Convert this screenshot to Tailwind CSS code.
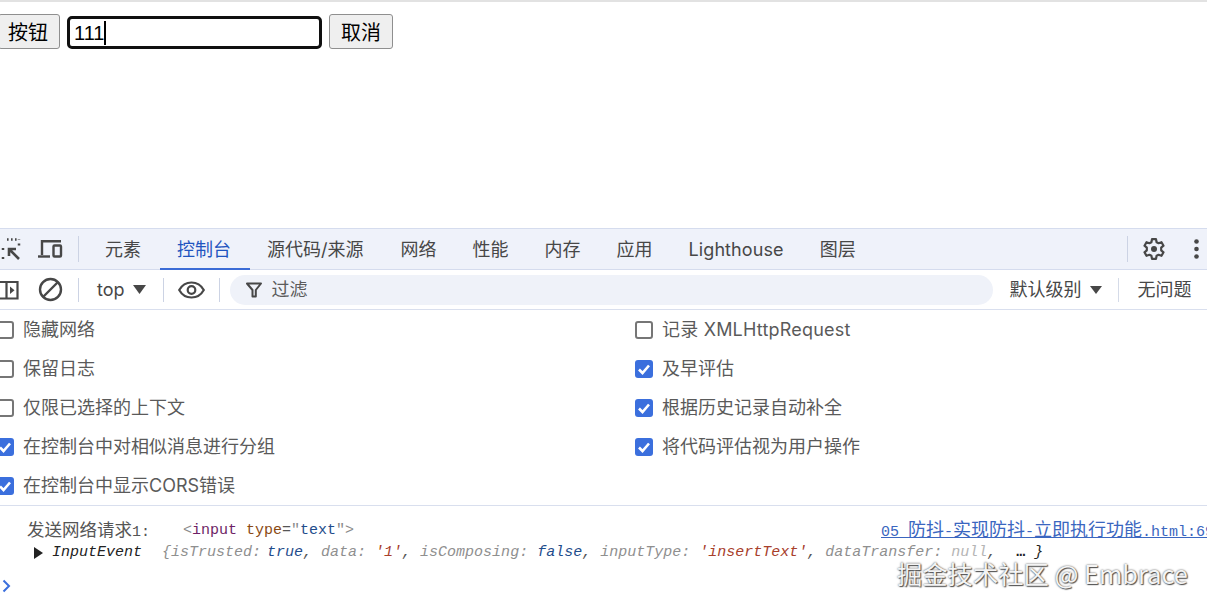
<!DOCTYPE html>
<html lang="zh-CN">
<head>
<meta charset="utf-8">
<script src="https://cdn.jsdelivr.net/npm/@tailwindcss/browser@4"></script>
</head>
<body class="bg-white">
<div class="relative w-[1207px] h-[606px] overflow-hidden flex flex-col font-['Inter','Noto_Sans_CJK_SC',sans-serif] text-[#474747]">
  <!-- page -->
  <div class="h-[228px] shrink-0 border-t-2 border-[#e2e2e2] flex items-start gap-[7px] pt-3 -ml-[2px] text-[20px] text-black font-['Liberation_Sans','Noto_Sans_CJK_SC',sans-serif]">
    <button class="w-[62px] h-[35px] rounded-[3px] border border-[#8f8f8f] bg-[#efefef] text-center leading-none pt-[3px] pr-[2px]">按钮</button>
    <div class="w-[255px] h-[33px] mt-[2px] rounded-[5px] border-[3px] border-[#101010] bg-white flex items-center pl-[4px] text-[20px]"><span>111</span><span class="w-[2px] h-[24px] bg-black"></span></div>
    <button class="w-[64px] h-[35px] rounded-[3px] border border-[#8f8f8f] bg-[#efefef] text-center leading-none pt-[3px]">取消</button>
  </div>

  <!-- tab bar -->
  <div class="h-[42px] shrink-0 bg-[#eff2fa] border-y border-[#d5dcee] flex items-center text-[18px] relative">
    <div class="w-[78px] flex items-center shrink-0">
      <svg class="ml-[1px]" width="20" height="22" viewBox="0 0 20 22" fill="none" stroke="#474747"><path d="M6 1.500h1.600M10 1.500h1.600M14 1.500h1.600M18 1.500v.5" stroke-width="2.500"/><path d="M18 5.500v2M2 10v2M2 19v2" stroke-width="2.500"/><path d="M18 21 8.500 11.500M8 18v-7h7" stroke-width="2.600"/></svg>
      <svg class="ml-[17px]" width="25" height="20" viewBox="0 0 25 20" fill="none" stroke="#474747" stroke-width="2.400"><path d="M4 16V2.200h19"/><path d="M0 17.500h12"/><rect x="15.500" y="6.500" width="7.500" height="11" rx="1"/></svg>
    </div>
    <div class="w-[1px] h-[26px] bg-[#ccd3e4]"></div>
    <div class="flex items-center h-full ml-[8px]">
      <span class="px-[18px]">元素</span>
      <span class="relative px-[18px] text-[#1f55c0] h-full flex items-center">控制台<span class="absolute left-[1px] -right-[1px] -bottom-[1px] h-[2px] bg-[#3b6cd6]"></span></span>
      <span class="pl-[18px] pr-[19px]">源代码/来源</span>
      <span class="px-[18px]">网络</span>
      <span class="px-[18px]">性能</span>
      <span class="px-[18px]">内存</span>
      <span class="px-[18px]">应用</span>
      <span class="px-[18px] tracking-[0.1px]">Lighthouse</span>
      <span class="px-[18px]">图层</span>
    </div>
    <div class="ml-auto flex items-center">
      <div class="w-[1px] h-[26px] bg-[#ccd3e4]"></div>
      <svg class="ml-[14px]" width="24" height="24" viewBox="0 0 24 24" fill="none" stroke="#474747" stroke-width="2.200"><path stroke-linejoin="round" d="M10 2.200h4l.6 3 2 1 2.900-1 2 3.500-2.300 2v2.600l2.300 2-2 3.500-2.900-1-2 1-.6 3h-4l-.6-3-2-1-2.900 1-2-3.500 2.300-2v-2.600l-2.300-2 2-3.500 2.900 1 2-1z"/><circle cx="12" cy="12" r="3" fill="#474747" stroke="none"/></svg>
      <svg class="ml-[28px] mr-[8px]" width="5" height="20" viewBox="0 0 5 20" fill="#474747"><circle cx="2.500" cy="2.500" r="2.300"/><circle cx="2.500" cy="10" r="2.300"/><circle cx="2.500" cy="17.500" r="2.300"/></svg>
    </div>
  </div>

  <!-- filter toolbar -->
  <div class="h-[40px] border-b border-[#d9dfee] flex items-center text-[18px] shrink-0">
    <div class="w-[78px] flex items-center shrink-0">
      <svg width="19" height="20" viewBox="0 0 19 20" fill="none" stroke="#474747" stroke-width="2.200"><path d="M0 2h17.500v16.500H0M6.500 2v16.500"/><path d="M10 6.500 14.500 10.200 10 14z" fill="#474747" stroke="none"/></svg>
      <svg class="ml-[19px]" width="25" height="25" viewBox="0 0 25 25" fill="none" stroke="#474747" stroke-width="2.400"><circle cx="12.500" cy="12.500" r="10.500"/><path d="M5 20 20 5"/></svg>
    </div>
    <div class="w-[1px] h-[24px] bg-[#ccd3e4]"></div>
    <span class="ml-[18px]">top</span>
    <svg class="ml-[8px]" width="13" height="9" viewBox="0 0 13 9" fill="#474747"><path d="M0 0h13L6.500 9z"/></svg>
    <div class="w-[1px] h-[24px] bg-[#ccd3e4] ml-[17px]"></div>
    <svg class="ml-[14px]" width="27" height="18" viewBox="0 0 27 18" fill="none" stroke="#474747" stroke-width="2.200"><path d="M1.200 9C4 4 8 1.500 13.500 1.500S23 4 25.800 9C23 14 19 16.500 13.500 16.500S4 14 1.200 9z"/><circle cx="13.500" cy="9" r="3.800"/></svg>
    <div class="w-[1px] h-[24px] bg-[#ccd3e4] ml-[14px]"></div>
    <div class="ml-[10px] w-[763px] h-[30px] rounded-full bg-[#eff2f9] flex items-center pl-[16px]">
      <svg width="16" height="16" viewBox="0 0 16 16" fill="none" stroke="#474747" stroke-width="2"><path d="M1 1.500h14L9.800 8v6.500H6.500V8z" stroke-linejoin="round"/></svg>
      <span class="ml-[10px] text-[#5b5b5b]">过滤</span>
    </div>
    <span class="ml-[17px]">默认级别</span>
    <svg class="ml-[8px]" width="12" height="8" viewBox="0 0 12 8" fill="#474747"><path d="M0 0h12L6 8z"/></svg>
    <div class="w-[1px] h-[24px] bg-[#d5dbe8] ml-[16px]"></div>
    <span class="ml-[19px]">无问题</span>
  </div>

  <!-- settings -->
  <div class="h-[196px] shrink-0 border-b border-[#d9dfee] grid grid-cols-[639px_1fr] -ml-[4px] text-[18px] text-[#5a5a5a]">
    <div class="flex flex-col">
      <label class="h-[39px] flex items-center gap-[9px]"><span class="w-[18px] h-[18px] rounded-[3px] border-2 border-[#767676] bg-white"></span>隐藏网络</label>
      <label class="h-[39px] flex items-center gap-[9px]"><span class="w-[18px] h-[18px] rounded-[3px] border-2 border-[#767676] bg-white"></span>保留日志</label>
      <label class="h-[39px] flex items-center gap-[9px]"><span class="w-[18px] h-[18px] rounded-[3px] border-2 border-[#767676] bg-white"></span>仅限已选择的上下文</label>
      <label class="h-[39px] flex items-center gap-[9px]"><span class="w-[18px] h-[18px] rounded-[3px] bg-[#3b6fdd] flex items-center justify-center"><svg width="14" height="14" viewBox="0 0 14 14" fill="none" stroke="#fff" stroke-width="2.600"><path d="M2 7.500 5.500 11 12 3.500"/></svg></span>在控制台中对相似消息进行分组</label>
      <label class="h-[39px] flex items-center gap-[9px]"><span class="w-[18px] h-[18px] rounded-[3px] bg-[#3b6fdd] flex items-center justify-center"><svg width="14" height="14" viewBox="0 0 14 14" fill="none" stroke="#fff" stroke-width="2.600"><path d="M2 7.500 5.500 11 12 3.500"/></svg></span>在控制台中显示CORS错误</label>
    </div>
    <div class="flex flex-col">
      <label class="h-[39px] flex items-center gap-[9px]"><span class="w-[18px] h-[18px] rounded-[3px] border-2 border-[#767676] bg-white"></span><span class="tracking-[0.2px]">记录 XMLHttpRequest</span></label>
      <label class="h-[39px] flex items-center gap-[9px]"><span class="w-[18px] h-[18px] rounded-[3px] bg-[#3b6fdd] flex items-center justify-center"><svg width="14" height="14" viewBox="0 0 14 14" fill="none" stroke="#fff" stroke-width="2.600"><path d="M2 7.500 5.500 11 12 3.500"/></svg></span>及早评估</label>
      <label class="h-[39px] flex items-center gap-[9px]"><span class="w-[18px] h-[18px] rounded-[3px] bg-[#3b6fdd] flex items-center justify-center"><svg width="14" height="14" viewBox="0 0 14 14" fill="none" stroke="#fff" stroke-width="2.600"><path d="M2 7.500 5.500 11 12 3.500"/></svg></span>根据历史记录自动补全</label>
      <label class="h-[39px] flex items-center gap-[9px]"><span class="w-[18px] h-[18px] rounded-[3px] bg-[#3b6fdd] flex items-center justify-center"><svg width="14" height="14" viewBox="0 0 14 14" fill="none" stroke="#fff" stroke-width="2.600"><path d="M2 7.500 5.500 11 12 3.500"/></svg></span>将代码评估视为用户操作</label>
    </div>
  </div>

  <!-- console -->
  <div class="flex-1 font-['Liberation_Mono','Noto_Sans_CJK_SC',monospace] text-[15px] pt-[14px]">
    <div class="h-[22px] flex items-center pl-[27px] relative whitespace-pre">
      <span class="text-[#555] w-[156px]"><span class="text-[17.5px]">发送网络请求</span>1:</span><span class="text-[#8a8a8a]">&lt;</span><span class="text-[#6e1f66]">input</span><span class="text-[#6e1f66]"> </span><span class="text-[#8a4a14]">type</span><span class="text-[#555]">=</span><span class="text-[#8a8a8a]">"</span><span class="text-[#1f4d8c]">text</span><span class="text-[#8a8a8a]">"&gt;</span>
      <span class="absolute left-[881px] top-0 h-[22px] underline text-[#3a66c0] leading-[22px]">05 <span class="text-[18px]">防抖</span>-<span class="text-[18px]">实现防抖</span>-<span class="text-[18px]">立即执行功能</span>.html:69</span>
    </div>
    <div class="h-[22px] flex items-center pl-[34px] italic whitespace-pre">
      <svg class="mr-[9px]" width="9" height="12" viewBox="0 0 9 12" fill="#222"><path d="M0 0 9 6 0 12z"/></svg><span class="text-[#222] w-[110px]">InputEvent</span><span class="text-[#8f8f8f]">{isTrusted: </span><span class="text-[#1f4d8c] -ml-[3px]">true</span><span class="text-[#555]">,</span><span class="text-[#8f8f8f]"> data: </span><span class="text-[#a8402c]">'1'</span><span class="text-[#555]">,</span><span class="text-[#8f8f8f]"> isComposing: </span><span class="text-[#1f4d8c]">false</span><span class="text-[#555]">,</span><span class="text-[#8f8f8f]"> inputType: </span><span class="text-[#a8402c]">'insertText'</span><span class="text-[#555]">,</span><span class="text-[#8f8f8f]"> dataTransfer: </span><span class="text-[#b5b5b5]">null</span><span class="text-[#555]">,</span><span class="ml-[20px] w-[18px] text-[#222] not-italic font-bold">…</span><span class="text-[#222]">}</span>
    </div>
    <svg class="mt-[15px] ml-[2px]" width="9" height="14" viewBox="0 0 9 14" fill="none" stroke="#3b6fdd" stroke-width="2"><path d="M1.500 1.500 7 7l-5.500 5.500"/></svg>
  </div>

  <!-- watermark -->
  <div class="absolute left-[897px] top-[563px] text-[25.3px] leading-[20px] text-[#f4f4f4] [text-shadow:0_0_2px_#444,1px_1px_1px_#555] font-['Noto_Sans_CJK_SC',sans-serif] whitespace-pre">掘金技术社区 @ Embrace</div>
</div>
</body>
</html>
